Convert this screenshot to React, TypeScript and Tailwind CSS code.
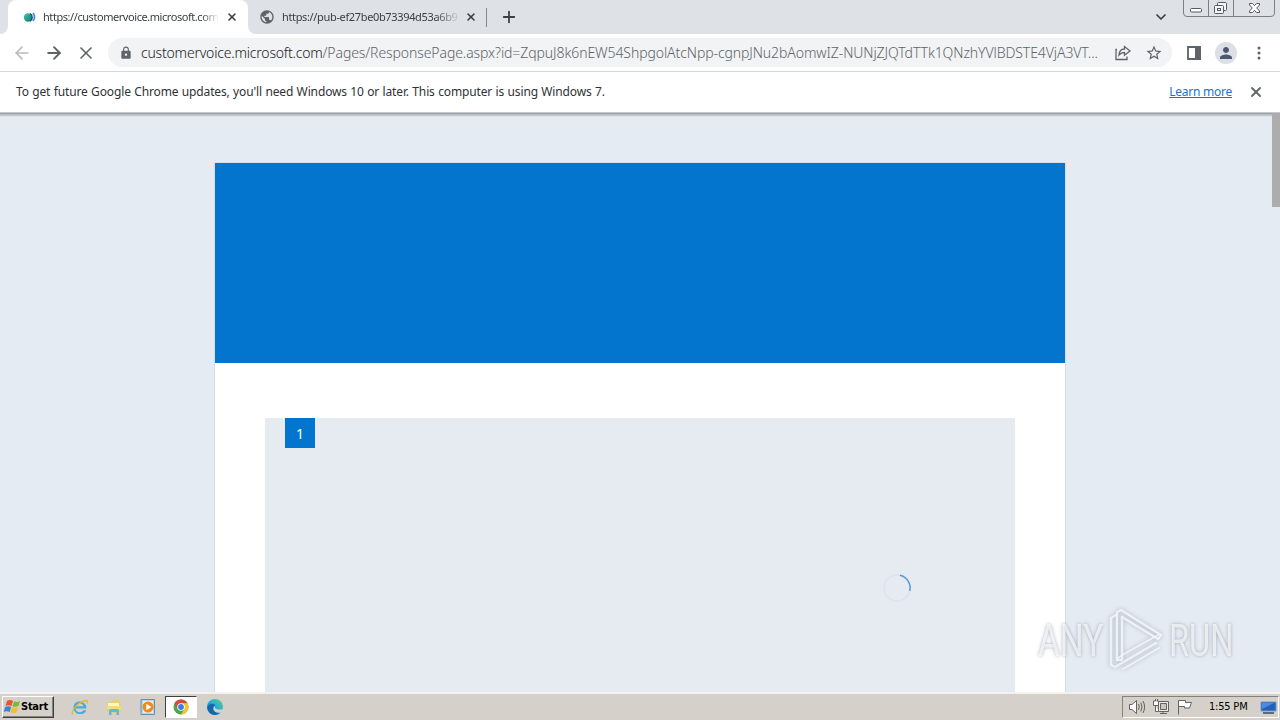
import type { ReactNode } from "react";
import { ArrowLeft, ArrowRight, ChevronDown, Plus, X } from "lucide-react";
import { MdLock, MdPerson, MdPublic, MdStarBorder } from "react-icons/md";

const PATH =
  "/Pages/ResponsePage.aspx?id=ZqpuJ8k6nEW54ShpgolAtcNpp-cgnpJNu2bAomwIZ-NUNjZJQTdTTk1QNzhYVlBDSTE4VjA3VT...";

function VoiceIcon() {
  return (
    <svg width="16" height="16" viewBox="0 0 16 16">
      <defs>
        <linearGradient id="voice" x1="0" y1="0" x2="1" y2="1">
          <stop offset="0" stopColor="#42c8a5" />
          <stop offset="1" stopColor="#087b78" />
        </linearGradient>
      </defs>
      <circle cx="6" cy="8.500" r="4.200" fill="url(#voice)" />
      <path d="M8 4.600a4.400 4.400 0 0 1 0 7.600" fill="none" stroke="#16566f" strokeWidth="1.400" />
      <path d="M11 4c1.800 2.400 1.800 5.600 0 8" fill="none" stroke="#4a8ce8" strokeWidth="1.800" />
    </svg>
  );
}

function TabStrip() {
  return (
    <header className="flex h-[34px] bg-[#dee1e6] font-['Noto_Sans',sans-serif] text-[11px] text-[#3c4043]">
      <div className="flex w-2 items-end bg-white">
        <div className="h-full w-full rounded-br-lg bg-[#dee1e6]" />
      </div>
      <div className="flex w-60 items-center rounded-t-lg bg-white pl-[14px]">
        <VoiceIcon />
        <div className="ml-[5px] w-[176px] overflow-hidden tracking-[-0.44px] whitespace-nowrap [mask-image:linear-gradient(to_right,black_90%,transparent)]">
          https://customervoice.microsoft.com
        </div>
        <X className="ml-[7px]" size={12} strokeWidth={3.2} />
      </div>
      <div className="w-2 bg-white">
        <div className="h-full w-full rounded-bl-lg bg-[#dee1e6]" />
      </div>
      <div className="flex w-[231px] items-center pl-[3px]">
        <MdPublic size={16} color="#5f6368" />
        <div className="ml-[7px] w-[179px] overflow-hidden tracking-[-0.35px] whitespace-nowrap [mask-image:linear-gradient(to_right,black_86%,transparent)]">
          https://pub-ef27be0b73394d53a6b9
        </div>
        <X className="ml-[4px]" size={12} strokeWidth={3.2} />
      </div>
      <div className="mt-2 ml-[-1px] h-[19px] w-px bg-[#80868b]" />
      <Plus className="mt-2 ml-[13px]" size={18} strokeWidth={2.4} />
      <div className="flex-1" />
      <ChevronDown className="mt-[9px] mr-[13px]" size={16} strokeWidth={2.6} />
      <WindowButtons />
      <div className="w-1" />
    </header>
  );
}

function WindowButtons() {
  return (
    <svg width="94" height="18" viewBox="0 0 94 18" fill="none" stroke="#7a7e85">
      <path d="M1.500 0v13q0 3.500 3.500 3.500h84q3.500 0 3.500-3.500V0M26.500 0v16M51.500 0v16" />
      <rect x="8.500" y="8.500" width="11" height="3.500" rx="1" fill="#fff" stroke="#555a63" />
      <g fill="#f4f5f7" stroke="#555a63">
        <rect x="35.500" y="2.500" width="9" height="8" rx="1" />
        <rect x="32.500" y="5.500" width="9" height="8" rx="1" />
        <rect x="35.500" y="8.500" width="3" height="2" />
      </g>
      <path
        d="M67.500 3.500h3l2 2.200 2-2.200h3v1.500l-2.800 3 2.800 3v1.500h-3l-2-2.200-2 2.200h-3v-1.500l2.800-3-2.800-3z"
        fill="#fff"
        stroke="#555a63"
      />
    </svg>
  );
}

function Toolbar() {
  return (
    <div className="flex h-[38px] items-center border-b border-[#d5d7da] bg-white font-['Noto_Sans',sans-serif] text-[#5f6368]">
      <ArrowLeft className="ml-[12px] text-[#b9bbbe]" size={20} strokeWidth={2} />
      <ArrowRight className="ml-[12px]" size={20} strokeWidth={2.3} />
      <X className="ml-[12px]" size={20} strokeWidth={2} />
      <div className="ml-[12px] flex h-[29px] w-[1064px] items-center rounded-full bg-[#f1f3f4] pl-[11px]">
        <MdLock size={14} />
        <div className="ml-[8px] w-[970px] text-[14px] leading-[22px] font-light whitespace-nowrap">
          <span className="tracking-[-0.2px] text-[#202124]">customervoice.microsoft.com</span>
          <span className="tracking-[-0.09px]">{PATH}</span>
        </div>
        <svg className="ml-[3px]" width="18" height="18" viewBox="0 0 18 18" fill="none" stroke="#5f6368" strokeWidth="1.300">
          <path d="M3 5.500H2v10h11v-3M5 11c.3-4 2.300-6 5.500-6V2.500L16 7l-5.500 4.200V8.500C8 8.500 6.500 9.200 5 11z" />
        </svg>
        <MdStarBorder className="ml-[13px]" size={18} />
      </div>
      <svg className="ml-[15px]" width="14" height="14" viewBox="0 0 14 14">
        <path d="M1 1h12v12H1z" fill="none" stroke="#5f6368" strokeWidth="1.800" />
        <path d="M8 0h6v14H8z" fill="#5f6368" />
      </svg>
      <div className="ml-[14px] flex size-[22px] items-center justify-center rounded-full bg-[#dcdfe4]">
        <MdPerson size={18} color="#4b5873" />
      </div>
      <svg className="ml-[20px]" width="4" height="16" viewBox="0 0 4 16" fill="#5f6368">
        <circle cx="2" cy="3" r="1.500" />
        <circle cx="2" cy="8" r="1.500" />
        <circle cx="2" cy="13" r="1.500" />
      </svg>
    </div>
  );
}

function InfoBar() {
  return (
    <div className="flex h-[40px] items-center bg-white pl-4 font-['Noto_Sans',sans-serif] text-[12px] text-[#303236]">
      <span className="tracking-[-0.13px] whitespace-nowrap [word-spacing:0.4px]">
        To get future Google Chrome updates, you'll need Windows 10 or later. This computer is using Windows 7.
      </span>
      <a className="ml-auto tracking-[-0.25px] text-[#1a73c8] underline">Learn more</a>
      <X className="mr-[16px] ml-[16px] text-[#5f6368]" size={16} strokeWidth={2.7} />
    </div>
  );
}

function Watermark() {
  return (
    <div className="absolute top-[493px] left-[1038px] flex h-[70px] items-center font-['Roboto',sans-serif] text-[44px] leading-none text-white/70 [text-shadow:0_0_4px_rgba(120,130,145,0.65)]">
      <span className="w-[70px] origin-left scale-x-[0.76]">ANY</span>
      <svg className="overflow-visible drop-shadow-[0_0_2px_rgba(120,130,145,0.6)]" width="60" height="66" viewBox="0 0 60 66" fill="none" stroke="#f5f7fa" strokeOpacity=".85" strokeLinecap="round" strokeLinejoin="round">
        <path d="M8 7L3 10v47l4 2 41-24" strokeWidth="2.500" />
        <path d="M9 52V4l4-2 40 25-3 4-36-22v43z" strokeWidth="2.500" />
        <path d="M10 50l6-4 34-19M15 61l36-21" strokeWidth="2" />
      </svg>
      <span className="ml-[1px] w-[66px] origin-left scale-x-[0.74]">RUN</span>
    </div>
  );
}

function Survey() {
  return (
    <main className="relative flex h-[579px] justify-center overflow-hidden bg-[#e5ebf3] pt-[50px]">
      <div className="absolute inset-x-0 top-0 h-[4px] bg-linear-to-b from-[#969ba1] to-transparent" />
      <div className="h-[529px] w-[850px] bg-white shadow-[0_0_1px_rgba(0,0,0,0.35)]">
        <div className="h-[200px] bg-[#0375cf]" />
        <div className="mx-[50px] mt-[55px] h-[274px] bg-[#e5ebf1] pl-5">
          <div className="flex size-[30px] items-center justify-center bg-[#0375cf] font-['Noto_Sans',sans-serif] text-[14px] text-white">
            1
          </div>
          <svg className="mt-[126px] ml-[597px]" width="30" height="30" viewBox="0 0 30 30" fill="none">
            <circle cx="15" cy="14" r="13" stroke="#dae4ed" strokeWidth="1.500" />
            <path d="M18 1.350A13 13 0 0 1 27.800 17" stroke="#5499cc" strokeWidth="1.500" />
          </svg>
        </div>
      </div>
      <div className="absolute top-0 right-0 h-[94px] w-2 bg-[#adadad]" />
      <Watermark />
    </main>
  );
}

function WindowsFlag() {
  return (
    <svg width="17" height="16" viewBox="0 0 17 16">
      <path d="M3 2q3-2 6 0L7.500 7q-3-1.500-6 0z" fill="#e8562a" />
      <path d="M10 2.300q3 1.500 6-.3L14.500 7q-3 1.500-6 .3z" fill="#79b83c" />
      <path d="M1.200 8q3-1.500 6 0L5.700 13q-3-1.700-6 0z" fill="#3d84d2" />
      <path d="M8.200 8.300q3 1.500 6-.3L12.700 13q-3 1.700-6 .3z" fill="#f5bd26" />
    </svg>
  );
}

function ExplorerIcon() {
  return (
    <svg width="18" height="18" viewBox="0 0 18 18" fill="none">
      <path d="M15 10.500H4.500c.2 4 5.800 5 8 1.700h2.800C13.500 18 2.500 17.500 2.500 9.500S13.800 1.500 15.500 9z" fill="#45acdf" />
      <path d="M5 8.300h7.300C12 4.500 5.500 4.500 5 8.300z" fill="#d5d2ca" />
      <path d="M1.500 16.500c-2-4 7-13 13-14 2-.3 2.500 1 1.500 3" stroke="#e9b533" strokeWidth="1.300" />
    </svg>
  );
}

function FolderIcon() {
  return (
    <svg width="18" height="18" viewBox="0 0 18 18">
      <path d="M2 4h5l1-2h7v3h1v10H2z" fill="#e8cf73" />
      <path d="M3 5h11v4H3z" fill="#fff6bd" />
      <path d="M2 8h14v3H2z" fill="#f2dc83" />
      <path d="M4 17v-4q0-2 2-2h6q2 0 2 2v4h-2.500v-3h-5v3z" fill="#65b6d9" />
    </svg>
  );
}

function PlayerIcon() {
  return (
    <svg width="18" height="18" viewBox="0 0 18 18">
      <path d="M2 1.500h13.500v15H2z" fill="#b7d4e8" stroke="#5c91b8" />
      <path d="M4 3h10v12H4z" fill="#e5eff5" />
      <circle cx="9" cy="9" r="5.500" fill="#f18a1d" />
      <path d="M7.300 5.700v6.600L12.500 9z" fill="#fff" />
    </svg>
  );
}

function ChromeIcon() {
  return (
    <svg width="16" height="16" viewBox="0 0 16 16">
      <circle cx="8" cy="8" r="7.500" fill="#4ba651" />
      <path d="M1.500 4.250A7.500 7.500 0 0 1 14.500 4.250H8L4.800 9.900z" fill="#dc473a" />
      <path d="M14.500 4.250A7.500 7.500 0 0 1 8 15.500l3.300-5.600L8 4.250z" fill="#f5c533" />
      <circle cx="8" cy="8" r="3.800" fill="#fff" />
      <circle cx="8" cy="8" r="2.900" fill="#3c7ddf" />
    </svg>
  );
}

function EdgeIcon() {
  return (
    <svg width="18" height="18" viewBox="0 0 18 18">
      <defs>
        <linearGradient id="edge" x1="0" y1="1" x2="1" y2="0">
          <stop offset="0" stopColor="#087acb" />
          <stop offset=".55" stopColor="#28aede" />
          <stop offset="1" stopColor="#65d164" />
        </linearGradient>
      </defs>
      <circle cx="9" cy="9" r="8" fill="url(#edge)" />
      <path d="M1.300 9.500C2.500 5 8 4.800 9.500 7.500 5 9 7 15.500 14 14.800c-5 4.500-12 1.500-12.700-5.300z" fill="#1267ad" />
      <path d="M9.500 7.500c-2 2 0 4.800 7 3.800L18 13l-3 1.500C7 16 5.500 9 9.500 7.500z" fill="#d5d2ca" />
    </svg>
  );
}

function TrayIcons() {
  return (
    <svg width="68" height="18" viewBox="0 0 68 18" fill="#fff" stroke="#65635f">
      <path d="M1.500 6.500H4l4.500-4v13l-4.500-4H1.500z" />
      <path d="M10.500 6q1.500 3 0 6M12.800 4.500q2.500 4.500 0 9M15 3q3.200 6 0 12" fill="none" />
      <path d="M30.500 3.500h10v10h-10zM32 15.500h7M35 13.500v2" fill="#eeeae2" />
      <path d="M32.500 5.500h6v6h-6z" fill="#cbc7bf" />
      <path d="M27.500 1v2h-2v4.500h5V3h-2M29.500 1v2M27.500 7.500v6h3" />
      <path d="M50.500 16.500v-14M50.500 2.500h7v2h6l-2 5.500h-5V8.500h-6z" />
    </svg>
  );
}

function TaskSlot({ children }: { children: ReactNode }) {
  return <div className="flex w-[34px] justify-center">{children}</div>;
}

function Taskbar() {
  return (
    <footer className="flex h-[28px] items-center border-t-2 border-[#f4f2ef] bg-[#d5d0c9] font-['DejaVu_Sans_Condensed','DejaVu_Sans',sans-serif] text-[11px] text-black">
      <div className="ml-[2px] flex h-[22px] w-[52px] items-center border border-t-white border-r-[#404040] border-b-[#404040] border-l-white pl-px font-bold shadow-[inset_-1px_-1px_#85827c]">
        <WindowsFlag />
        <span className="tracking-[-0.25px]">Start</span>
      </div>
      <div className="ml-[9px] flex items-center">
        <TaskSlot><ExplorerIcon /></TaskSlot>
        <TaskSlot><FolderIcon /></TaskSlot>
        <TaskSlot><PlayerIcon /></TaskSlot>
        <div className="flex h-[22px] w-[32px] items-center justify-center border border-t-[#404040] border-r-white border-b-white border-l-[#404040] bg-white">
          <ChromeIcon />
        </div>
        <div className="ml-px"><TaskSlot><EdgeIcon /></TaskSlot></div>
      </div>
      <div className="mr-px ml-auto flex h-[22px] w-[157px] items-center border border-t-[#85827c] border-r-white border-b-white border-l-[#85827c] pl-[5px]">
        <TrayIcons />
        <span className="ml-[13px] w-[43px] tracking-[-0.2px] whitespace-nowrap">1:55 PM</span>
        <svg className="ml-[8px]" width="17" height="15" viewBox="0 0 17 15">
          <path d="M1 2h15v9H1z" fill="#245fba" stroke="#6c9bd2" />
          <path d="M2 3h12L2 9z" fill="#4b8bdc" />
          <path d="M3 13h11" stroke="#606b79" strokeWidth="2" />
        </svg>
      </div>
    </footer>
  );
}

export default function App() {
  return (
    <div className="flex h-[720px] w-[1280px] flex-col overflow-hidden">
      <TabStrip />
      <Toolbar />
      <InfoBar />
      <div className="h-px w-full bg-[#c4c8cc]" />
      <Survey />
      <Taskbar />
    </div>
  );
}
